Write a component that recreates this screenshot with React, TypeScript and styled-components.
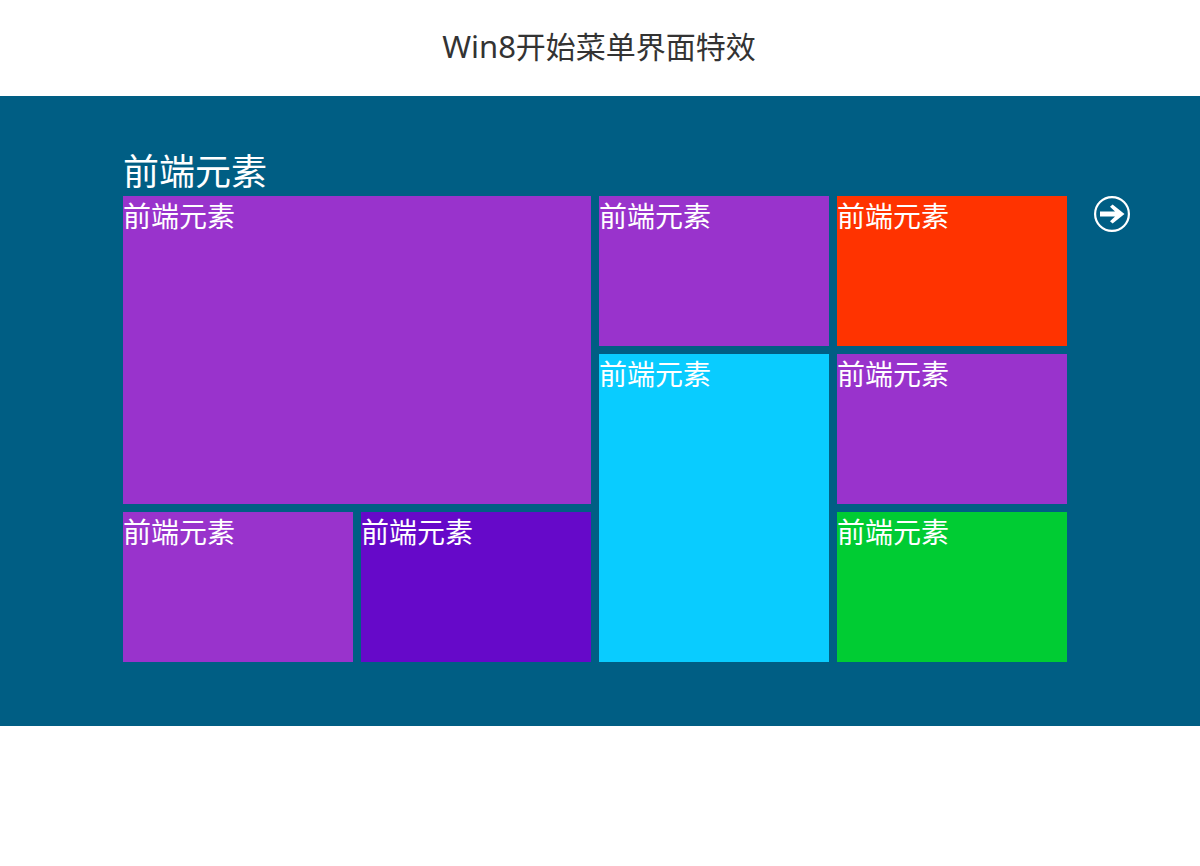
import React from 'react'
import styled, { createGlobalStyle } from 'styled-components'

const GlobalStyle = createGlobalStyle`
body {
    margin: 0;
    background-color: white;
    font-family: "Noto Sans", "Noto Sans CJK SC", sans-serif;
}
`

const Header = styled.h1`
height: 96px;
margin: 0;
padding-right: 2px;
box-sizing: border-box;
text-align: center;
line-height: 92px;
font-size: 30px;
font-weight: 400;
color: #333;
`

const Latin = styled.span`
font-size: 31px;
`

const Panel = styled.section`
height: 630px;
box-sizing: border-box;
padding: 52px 0 0 123px;
background-color: #005e84;
color: white;
`

const SectionTitle = styled.h2`
margin: 0;
height: 48px;
line-height: 48px;
font-size: 36px;
font-weight: 400;
`

const Row = styled.div`
display: flex;
align-items: flex-start;
gap: 27px;
`

const Grid = styled.div`
display: grid;
grid-template-columns: repeat(4, 230px);
grid-auto-rows: 150px;
gap: 8px;
`

const Tile = styled.div<{ $color: string; $cols?: number; $rows?: number }>`
grid-column: span ${p => p.$cols ?? 1};
grid-row: span ${p => p.$rows ?? 1};
background-color: ${p => p.$color};
font-size: 28px;
line-height: 40px;
`

const NextButton = styled.div`
display: flex;
width: 36px;
height: 36px;
`

const tiles = [
    { color: '#9933cc', cols: 2, rows: 2 },
    { color: '#9933cc' },
    { color: '#ff3300' },
    { color: '#09ccff', rows: 2 },
    { color: '#9933cc' },
    { color: '#9933cc' },
    { color: '#6609c9' },
    { color: '#00cc33' },
]

const App = () => {
    return (
        <>
            <GlobalStyle />
            <Header><Latin>Win8</Latin>开始菜单界面特效</Header>
            <Panel>
                <SectionTitle>前端元素</SectionTitle>
                <Row>
                    <Grid>
                        {tiles.map((t, i) => (
                            <Tile key={i} $color={t.color} $cols={t.cols} $rows={t.rows}>前端元素</Tile>
                        ))}
                    </Grid>
                    <NextButton>
                        <svg width="36" height="36" viewBox="0 0 36 36" fill="none">
                            <circle cx="18" cy="18" r="16.9" stroke="white" strokeWidth="2.2" />
                            <path d="M6 15.6H21L16 10.8L18.6 8.6L30.5 18L18.6 27.4L16 25.2L21 20.4H6Z" fill="white" />
                        </svg>
                    </NextButton>
                </Row>
            </Panel>
        </>
    )
}

export default App
